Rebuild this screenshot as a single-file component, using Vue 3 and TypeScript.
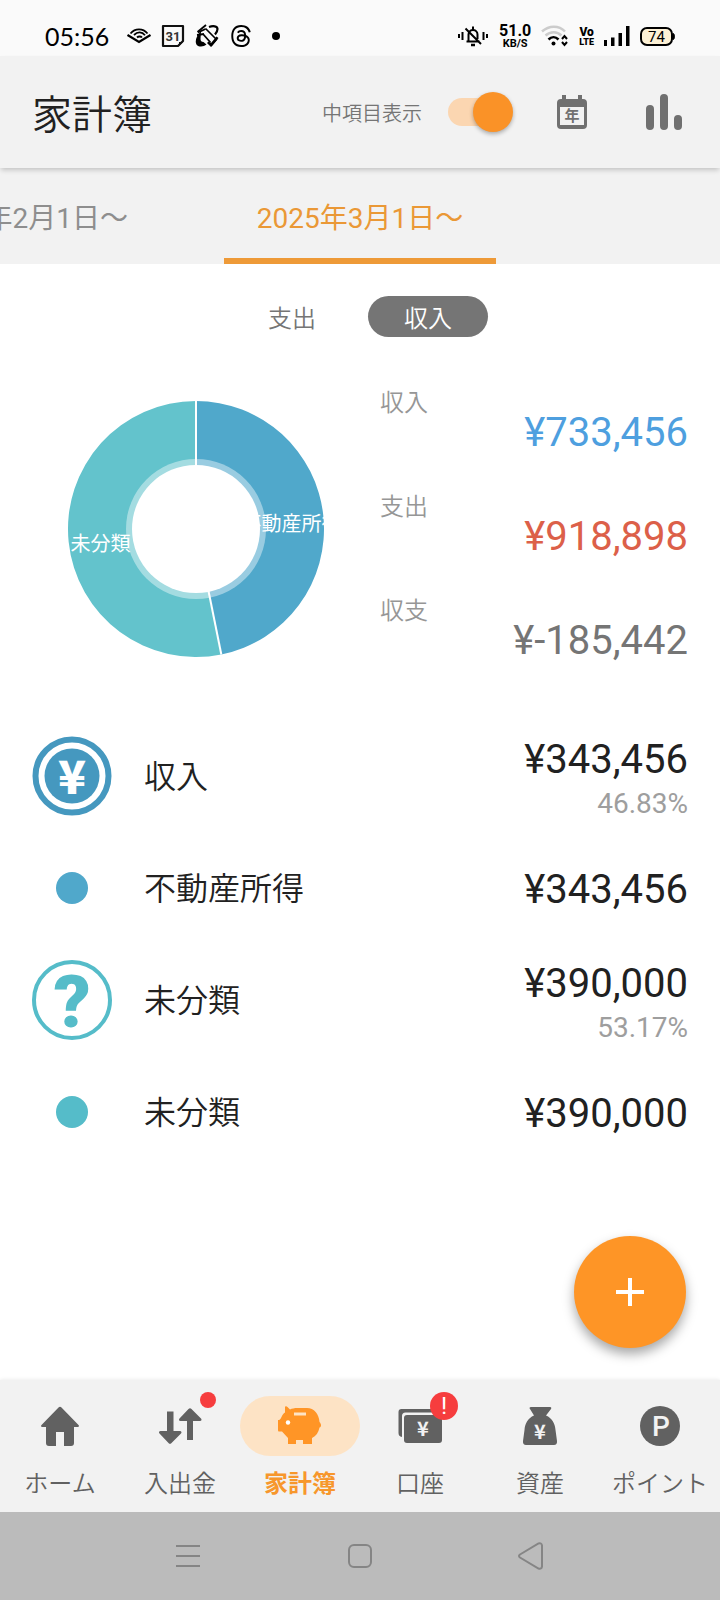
<script setup lang="ts">
import { computed, ref } from 'vue'

type Kind = 'expense' | 'income'

interface Slice {
  name: string
  share: number
  color: string
}

interface Entry {
  id: number
  name: string
  amount: number
  icon: 'yen' | 'question' | 'dot'
  color: string
  percent?: string
}

const showSub = ref(true)
const kind = ref<Kind>('income')

const kinds: { key: Kind; label: string }[] = [
  { key: 'expense', label: '支出' },
  { key: 'income', label: '収入' },
]

const totals = [
  { label: '収入', amount: 733456, tone: 'plus' },
  { label: '支出', amount: 918898, tone: 'minus' },
  { label: '収支', amount: -185442, tone: 'net' },
]

const slices: Slice[] = [
  { name: '不動産所得', share: 0.4683, color: '#50a8cb' },
  { name: '未分類', share: 0.5317, color: '#63c3cc' },
]

const entries: Entry[] = [
  { id: 1, name: '収入', amount: 343456, icon: 'yen', color: '#4598bf', percent: '46.83%' },
  { id: 2, name: '不動産所得', amount: 343456, icon: 'dot', color: '#50a8cb' },
  { id: 3, name: '未分類', amount: 390000, icon: 'question', color: '#55bcc9', percent: '53.17%' },
  { id: 4, name: '未分類', amount: 390000, icon: 'dot', color: '#55bcc9' },
]

const navItems = [
  { key: 'home', label: 'ホーム' },
  { key: 'transfer', label: '入出金' },
  { key: 'budget', label: '家計簿' },
  { key: 'account', label: '口座' },
  { key: 'asset', label: '資産' },
  { key: 'point', label: 'ポイント' },
]

const yen = (value: number): string => '¥' + value.toLocaleString('en-US')

const OUTER = 128
const MIDDLE = 96

function point(turn: number, radius: number): { x: number; y: number } {
  const angle = turn * Math.PI * 2
  return { x: Math.sin(angle) * radius, y: -Math.cos(angle) * radius }
}

const arcs = computed(() => {
  let start = 0
  return slices.map((slice) => {
    const end = start + slice.share
    const a = point(start, OUTER)
    const b = point(end, OUTER)
    const label = point((start + end) / 2, MIDDLE)
    const large = slice.share > 0.5 ? 1 : 0
    start = end
    return {
      ...slice,
      d: `M0 0L${a.x} ${a.y}A${OUTER} ${OUTER} 0 ${large} 1 ${b.x} ${b.y}Z`,
      edge: a,
      label,
    }
  })
})
</script>

<template>
  <div class="page">
    <div class="status">
      <div class="status-left">
        <span class="clock">05:56</span>
        <svg width="24" height="24" viewBox="0 0 24 24" fill="none" stroke="#000" stroke-width="1.800">
          <path d="M.5 11L12 18l11.500-7" stroke-width="2.200" />
          <path d="M3.500 9.500C8 4 16 4 20.500 9.500M7 11c3.500-3.500 8-3.500 11 .3M10 13.500c1.500-1.500 4-1.200 5 0" />
        </svg>
        <svg width="24" height="24" viewBox="0 0 24 24">
          <path d="M2 2h20v15l-5 5H2z" fill="none" stroke="#111" stroke-width="2.200" stroke-linejoin="round" />
          <path d="M22 18l-4 4v-4z" fill="#111" />
          <text x="12" y="16.500" text-anchor="middle" class="cal-day">31</text>
        </svg>
        <svg width="24" height="24" viewBox="0 0 24 24" fill="none" stroke="#000">
          <path d="M2.500 8L11 1" stroke-width="1.800" />
          <path d="M14 3c4-1.500 8.500-1 8.500 2 0 2-.8 3.500-2.500 5.500" stroke-width="2.200" />
          <path d="M10.500 4.500l11 11-5.500 6.500" stroke-width="1.600" />
          <path d="M6 7c-7 7-7 15.500 0 15.500 2 0 4-.8 5.500-2L8.500 18c-2 0-3-1-3-3z" fill="#000" stroke="none" />
          <path d="M2 11l7-1M3 8.500L10.500 5M8 10l7.500 8.500" stroke-width="1.800" />
          <path d="M16 23l-4-4 1.500-1.500 2.500 1.500 5.500-6.500 2 1.500z" fill="#000" stroke="none" />
        </svg>
        <svg width="24" height="24" viewBox="-1 -1 26 26">
          <path
            d="M12.186 24h-.007c-3.581-.024-6.334-1.205-8.184-3.509C2.350 18.440 1.500 15.586 1.472 12.010v-.017c.03-3.579.879-6.430 2.525-8.482C5.845 1.205 8.600.024 12.180 0h.014c2.746.020 5.043.725 6.826 2.098 1.677 1.290 2.858 3.130 3.509 5.467l-2.040.569c-1.104-3.960-3.898-5.984-8.304-6.015-2.910.022-5.110.936-6.540 2.717C4.307 6.504 3.616 8.914 3.589 12c.027 3.086.718 5.496 2.057 7.164 1.430 1.783 3.631 2.698 6.540 2.717 2.623-.020 4.358-.631 5.800-2.045 1.647-1.613 1.618-3.593 1.090-4.798-.310-.710-.873-1.300-1.634-1.750-.192 1.352-.622 2.446-1.284 3.272-.886 1.102-2.140 1.704-3.730 1.790-1.202.065-2.361-.218-3.259-.801-1.063-.689-1.685-1.740-1.752-2.964-.065-1.190.408-2.285 1.330-3.082.880-.760 2.119-1.207 3.583-1.291a13.853 13.853 0 0 1 3.020.142c-.126-.742-.375-1.332-.750-1.757-.513-.586-1.308-.883-2.359-.890h-.029c-.844 0-1.992.232-2.721 1.320L7.734 7.847c.980-1.454 2.568-2.256 4.478-2.256h.044c3.194.020 5.097 1.975 5.287 5.388.108.046.216.094.321.142 1.490.700 2.580 1.761 3.154 3.070.797 1.820.871 4.790-1.548 7.158-1.850 1.810-4.094 2.628-7.277 2.650Zm1.003-11.690c-.242 0-.487.007-.739.021-1.836.103-2.980.946-2.916 2.143.067 1.256 1.452 1.839 2.784 1.767 1.224-.065 2.818-.543 3.086-3.710a10.500 10.500 0 0 0-2.215-.221z"
            fill="#000"
          />
        </svg>
        <svg width="24" height="24" viewBox="0 0 24 24"><circle cx="13" cy="12" r="4" /></svg>
      </div>

      <div class="status-right">
        <svg width="32" height="24" viewBox="0 0 32 24" fill="none" stroke="#000" stroke-width="2">
          <path d="M2 10v4M5.500 8v8M26.500 8v8M30 10v4" />
          <path d="M9.500 17.500h13M11.500 17v-6.500c0-6 9-6 9 0V15M16 2.500v3M8.500 4.500L24 20" />
          <path d="M14 21h4" stroke-width="2.500" />
        </svg>
        <span class="speed"><b>51.0</b><small>KB/S</small></span>
        <svg width="28" height="24" viewBox="0 0 28 24" fill="none" stroke-width="2.500">
          <path d="M1 7.500c7-6.500 17-6.500 23 0M4.500 11.500c5-4.500 11.500-4.500 16 0" stroke="#ccc" />
          <path d="M7.500 15.500c3-3 7-3 10 0" stroke="#000" />
          <circle cx="12.500" cy="19.500" r="2" fill="#000" />
          <path d="M21 15l2.500-3 2.500 3M21 18l2.500 3 2.500-3" stroke="#000" stroke-width="2" />
        </svg>
        <span class="volte"><b>Vo</b><b>LTE</b></span>
        <svg width="26" height="24" viewBox="0 0 26 24">
          <path d="M0 16h3v6H0zM7 13.500h3.500V22H7zM14.500 9H18v13h-3.500zM22 2h3.500v20H22z" />
        </svg>
        <svg width="35" height="24" viewBox="0 0 35 24">
          <rect x="1" y="4" width="31" height="17" rx="6" fill="#fdf1d6" stroke="#000" stroke-width="2" />
          <path d="M33 9.500c2 0 2 6 0 6z" stroke="#000" />
          <text x="16.500" y="17.500" text-anchor="middle" class="battery">74</text>
        </svg>
      </div>
    </div>

    <header class="header">
      <h1>家計簿</h1>
      <label class="toggle-label" for="sub-toggle">中項目表示</label>
      <span class="toggle">
        <input id="sub-toggle" v-model="showSub" type="checkbox" role="switch" />
      </span>
      <button class="icon-button" type="button" aria-label="年表示">
        <svg width="48" height="48" viewBox="0 0 48 48">
          <path d="M14 7h4v4h12V7h4v4h1a4 4 0 0 1 4 4v22a4 4 0 0 1-4 4H13a4 4 0 0 1-4-4V15a4 4 0 0 1 4-4h1z" fill="#707070" />
          <path d="M12 19h24v18H12z" fill="#f2f2f2" />
          <text x="24" y="33" text-anchor="middle" class="year">年</text>
        </svg>
      </button>
      <button class="icon-button" type="button" aria-label="グラフ">
        <svg width="48" height="48" viewBox="0 0 48 48" stroke="#707070" stroke-width="8" stroke-linecap="round">
          <path d="M10 21v17M24 10v28M38 31v7" />
        </svg>
      </button>
    </header>

    <nav class="tabs" aria-label="期間">
      <button class="tab prev" type="button">2025年2月1日〜</button>
      <button class="tab current" type="button" aria-current="true">2025年3月1日〜</button>
    </nav>

    <main class="main">
      <div class="segment">
        <button
          v-for="k in kinds"
          :key="k.key"
          type="button"
          :class="{ on: kind === k.key }"
          :aria-pressed="kind === k.key"
          @click="kind = k.key"
        >
          {{ k.label }}
        </button>
      </div>

      <section class="summary">
        <svg class="donut" width="256" height="256" viewBox="-128 -128 256 256">
          <path v-for="arc in arcs" :key="arc.name" :d="arc.d" :fill="arc.color" />
          <circle r="70" fill="#fff" fill-opacity=".42" />
          <line v-for="arc in arcs" :key="arc.name" x1="0" y1="0" :x2="arc.edge.x" :y2="arc.edge.y" stroke="#fff" stroke-width="2" />
          <circle r="64" fill="#fff" />
          <text v-for="arc in arcs" :key="arc.name" :x="arc.label.x" :y="arc.label.y + 12" text-anchor="middle">{{ arc.name }}</text>
        </svg>
        <dl class="totals">
          <div v-for="t in totals" :key="t.label">
            <dt>{{ t.label }}</dt>
            <dd :class="t.tone">{{ yen(t.amount) }}</dd>
          </div>
        </dl>
      </section>

      <ul class="entries">
        <li v-for="e in entries" :key="e.id">
          <svg width="80" height="80" viewBox="0 0 80 80">
            <template v-if="e.icon === 'yen'">
              <circle cx="40" cy="40" r="36.500" fill="#fff" :stroke="e.color" stroke-width="6" />
              <circle cx="40" cy="40" r="27.500" :fill="e.color" />
              <text x="40" y="58" text-anchor="middle" class="yen-mark">¥</text>
            </template>
            <template v-else-if="e.icon === 'question'">
              <circle cx="40" cy="40" r="38" fill="none" :stroke="e.color" stroke-width="4" />
              <text x="40" y="67" text-anchor="middle" class="question-mark" :fill="e.color">?</text>
            </template>
            <circle v-else cx="40" cy="40" r="16" :fill="e.color" />
          </svg>
          <span class="name">{{ e.name }}</span>
          <span class="value" :class="{ double: e.percent }">
            <span class="amount">{{ yen(e.amount) }}</span>
            <span v-if="e.percent" class="percent">{{ e.percent }}</span>
          </span>
        </li>
      </ul>

      <button class="fab" type="button" aria-label="追加">
        <svg width="28" height="28" viewBox="0 0 28 28" stroke="#fff" stroke-width="4"><path d="M14 0v28M0 14h28" /></svg>
      </button>
    </main>

    <nav class="bottom" aria-label="メイン">
      <a v-for="n in navItems" :key="n.key" href="#" :class="{ active: n.key === 'budget' }">
        <span class="pill">
          <svg v-if="n.key === 'home'" width="48" height="48" viewBox="0 0 48 48" fill="#616161">
            <path d="M22.500 5.500a2 2 0 0 1 3 0l17 17.500c1 1.200.5 2-1 2H38v16a3 3 0 0 1-3 3h-7V30h-8v14h-7a3 3 0 0 1-3-3V25H6.500c-1.500 0-2-.8-1-2z" />
          </svg>
          <svg v-else-if="n.key === 'transfer'" width="48" height="48" viewBox="0 0 48 48" fill="#616161">
            <path d="M11 9.500h6.500V29H24c1.500 0 2 1.500 1 2.500L15.500 41a2 2 0 0 1-3 0L3.500 31.500c-1-1-.5-2.500 1-2.500H11z" />
            <path d="M31 38h6V19h7c1.500 0 2-1.500 1-2.500L35.500 7a2 2 0 0 0-3 0L23.500 16.500c-1 1-.5 2.500 1 2.500H31z" />
          </svg>
          <svg v-else-if="n.key === 'budget'" width="48" height="48" viewBox="0 0 48 48">
            <path
              d="M9 5.500c0-1.500 1.500-1.500 2.500-.5L14 7.500C16 6.500 18 6 22 6h9c7 0 12 6 12.500 14 2 2 2 5 0 5.500-1 5-3.500 8.500-7.500 10.500v6h-9v-4h-7v4h-8v-6l-6-6.500H3.500C2 29.500 2 29 2 27v-9c1.500 0 2.500-.5 3.500-3C6.500 12.500 7.500 11.500 9 10.500z"
              fill="#ff9526"
            />
            <rect x="18" y="10.500" width="12" height="3" fill="#fde3c5" />
            <circle cx="12" cy="20.500" r="2.200" fill="#fff" />
          </svg>
          <svg v-else-if="n.key === 'account'" width="48" height="48" viewBox="0 0 48 48" fill="#616161">
            <path d="M5.500 7H40v3.500H9.500A3.500 3.500 0 0 0 6 14v21a4 4 0 0 1-3.500-4V10a3 3 0 0 1 3-3z" />
            <rect x="8" y="13" width="38" height="28" rx="3" />
            <text x="27" y="34" text-anchor="middle" class="small-yen">¥</text>
          </svg>
          <svg v-else-if="n.key === 'asset'" width="48" height="48" viewBox="0 0 48 48" fill="#616161">
            <path d="M15 5h19c1.500 0 1.500 1 1 2l-5 6.500c6 2.500 9 8 9.500 14.500l1.500 11c.3 2.500-1 4-3 4H10c-2 0-3.300-1.500-3-4l1.500-11c.5-6.500 3.500-12 9.500-14.500L14 7c-1-1-.5-2 1-2z" />
            <text x="24" y="37" text-anchor="middle" class="small-yen">¥</text>
          </svg>
          <svg v-else width="48" height="48" viewBox="0 0 48 48">
            <circle cx="24" cy="24" r="20" fill="#616161" />
            <text x="25" y="34" text-anchor="middle" class="point-mark">P</text>
          </svg>
          <i v-if="n.key === 'transfer'" class="dot-badge"></i>
          <i v-if="n.key === 'account'" class="alert-badge">!</i>
        </span>
        <span class="nav-label">{{ n.label }}</span>
      </a>
    </nav>

    <div class="system">
      <button type="button" aria-label="履歴">
        <svg width="28" height="28" viewBox="0 0 28 28"><path d="M2 4h24M2 14h24M2 24h24" /></svg>
      </button>
      <button type="button" aria-label="ホーム画面">
        <svg width="28" height="28" viewBox="0 0 28 28"><rect x="3" y="3" width="22" height="22" rx="5" /></svg>
      </button>
      <button type="button" aria-label="戻る">
        <svg width="28" height="28" viewBox="0 0 28 28"><path d="M2 12.500L20.500 1.500q3-1 3.500 2v21q-.5 3-3.500 2L2 15.500q-2-1.500 0-3z" /></svg>
      </button>
    </div>
  </div>
</template>

<style>
body {
  margin: 0;
}
</style>

<style scoped>
.page {
  display: flex;
  flex-direction: column;
  min-height: 100vh;
  background: #fff;
  color: #212121;
  font-family: Roboto, 'Noto Sans CJK JP', sans-serif;
  overflow-x: hidden;
}
button {
  border: 0;
  padding: 0;
  background: none;
  color: inherit;
  font: inherit;
  cursor: pointer;
}
svg {
  display: block;
  flex: none;
}

.status {
  display: flex;
  justify-content: space-between;
  align-items: center;
  height: 56px;
  padding: 16px 45px 0;
  box-sizing: border-box;
  background: #fafafa;
  color: #000;
}
.status-left,
.status-right {
  display: flex;
  align-items: center;
  gap: 10px;
}
.clock {
  margin-right: 8px;
  font: 25px/32px Lato, sans-serif;
}
.cal-day {
  font: 700 13px Roboto, sans-serif;
  fill: #333;
}
.speed,
.volte {
  display: flex;
  flex-direction: column;
  align-items: center;
}
.speed b {
  font: 700 16px/14px Roboto, sans-serif;
}
.speed small {
  font: 700 11px/11px Roboto, sans-serif;
}
.volte b {
  font: 900 12px/12px Roboto, sans-serif;
}
.volte b + b {
  font-size: 9px;
  line-height: 9px;
}
.battery {
  font: 15px Roboto, sans-serif;
}

.header {
  position: relative;
  z-index: 1;
  display: flex;
  align-items: center;
  height: 112px;
  padding: 0 28px 0 32px;
  box-sizing: border-box;
  background: #f2f2f2;
  box-shadow: 0 3px 5px -1px rgba(0, 0, 0, 0.2);
}
h1,
.segment button {
  font-family: 'Noto Sans CJK JP', sans-serif;
}
h1 {
  flex: 1;
  margin: 0;
  font-size: 40px;
  line-height: 56px;
  font-weight: 350;
}
.toggle-label {
  margin-right: 26px;
  font-size: 20px;
  font-weight: 350;
  color: #757575;
}
.toggle {
  display: flex;
}
.toggle input {
  appearance: none;
  position: relative;
  width: 60px;
  height: 28px;
  margin: 0;
  border-radius: 14px;
  background: #d0d0d0;
}
.toggle input::before {
  content: '';
  position: absolute;
  top: -6px;
  left: -5px;
  width: 40px;
  height: 40px;
  border-radius: 50%;
  background: #fafafa;
  box-shadow: 0 2px 4px rgba(0, 0, 0, 0.3);
}
.toggle input:checked {
  background: #fbd6b1;
}
.toggle input:checked::before {
  left: 25px;
  background: #fa9227;
}
.icon-button {
  display: flex;
  justify-content: center;
  width: 56px;
  margin-left: 36px;
}
.year {
  font: 700 15px 'Noto Sans CJK JP', sans-serif;
  fill: #707070;
}

.tabs {
  display: grid;
  grid-template-columns: minmax(0, 1fr) 272px minmax(0, 1fr);
  column-gap: 64px;
  height: 96px;
  overflow: hidden;
  background: #f2f2f2;
}
.tab {
  padding-top: 6px;
  font-size: 28px;
  white-space: nowrap;
  color: #8e8e8e;
  border-bottom: 6px solid transparent;
}
.prev {
  justify-self: end;
  padding-left: 32px;
  padding-right: 32px;
}
.current {
  color: #ea9836;
  border-color: #ee9a38;
}

.main {
  position: relative;
  flex: 1;
  padding: 32px 32px 0;
}
.segment {
  display: flex;
  justify-content: center;
  gap: 16px;
}
.segment button {
  width: 120px;
  height: 41px;
  border-radius: 21px;
  font-size: 24px;
  font-weight: 350;
  line-height: 41px;
  color: #757575;
}
.segment .on {
  background: #757575;
  color: #fff;
}

.summary {
  display: flex;
  align-items: flex-end;
  gap: 56px;
  margin-top: 54px;
  padding-left: 36px;
}
.donut {
  margin-bottom: 2px;
}
.donut text {
  font-size: 20px;
  fill: #fff;
}
.totals {
  display: grid;
  flex: 1;
  gap: 44px;
  margin: 0;
}
dt {
  font-size: 24px;
  line-height: 24px;
  font-weight: 350;
  color: #969696;
}
dd {
  margin: 0;
  font-size: 40px;
  line-height: 36px;
  text-align: right;
}
.plus {
  color: #4e9fdf;
}
.minus {
  color: #dc6049;
}
.net {
  color: #757575;
}

.entries {
  margin: 61px 0 0;
  padding: 0;
  list-style: none;
}
.entries li {
  display: flex;
  align-items: center;
  min-height: 112px;
}
.name {
  flex: 1;
  margin-left: 32px;
  padding-top: 2px;
  font-size: 32px;
  line-height: 40px;
  font-weight: 350;
}
.value {
  display: flex;
  flex-direction: column;
  padding-top: 4px;
  text-align: right;
}
.double {
  padding-top: 12px;
}
.amount {
  font-size: 40px;
  line-height: 44px;
}
.percent {
  font-size: 28px;
  line-height: 44px;
  color: #9e9e9e;
}
.yen-mark {
  font: 900 46px 'Noto Sans CJK JP', sans-serif;
  fill: #fff;
}
.question-mark {
  font: 900 73px Roboto, sans-serif;
}
.fab {
  position: absolute;
  right: 34px;
  bottom: 32px;
  display: grid;
  place-items: center;
  width: 112px;
  height: 112px;
  border-radius: 50%;
  background: #fe9526;
  box-shadow: 0 6px 12px rgba(0, 0, 0, 0.35);
}

.bottom {
  display: grid;
  grid-template-columns: repeat(6, minmax(0, 1fr));
  padding: 16px 0 13px;
  background: #f2f2f2;
  box-shadow: 0 0 4px rgba(0, 0, 0, 0.1);
}
.bottom a {
  display: flex;
  flex-direction: column;
  align-items: center;
  gap: 13px;
  color: #616161;
  text-decoration: none;
}
.pill {
  position: relative;
  display: flex;
  justify-content: center;
  align-items: center;
  width: 120px;
  height: 60px;
  border-radius: 30px;
}
.nav-label {
  font-size: 24px;
  line-height: 30px;
  font-weight: 350;
  white-space: nowrap;
}
.active .pill {
  background: #fde3c5;
}
.active .nav-label {
  color: #f7972c;
  font-weight: 700;
}
.small-yen {
  font: 700 20px 'Noto Sans CJK JP', sans-serif;
  fill: #f2f2f2;
}
.point-mark {
  font: 500 28px Roboto, sans-serif;
  fill: #f2f2f2;
}
.dot-badge,
.alert-badge {
  position: absolute;
  border-radius: 50%;
  background: #f63d3e;
}
.dot-badge {
  top: -4px;
  right: 24px;
  width: 16px;
  height: 16px;
}
.alert-badge {
  top: -4px;
  right: 22px;
  width: 28px;
  height: 28px;
  font: 24px/28px Roboto, sans-serif;
  text-align: center;
  color: #fff;
}

.system {
  display: flex;
  justify-content: center;
  align-items: center;
  gap: 144px;
  height: 88px;
  background: #bbb;
}
.system svg {
  fill: none;
  stroke: #858585;
  stroke-width: 2;
}
</style>
